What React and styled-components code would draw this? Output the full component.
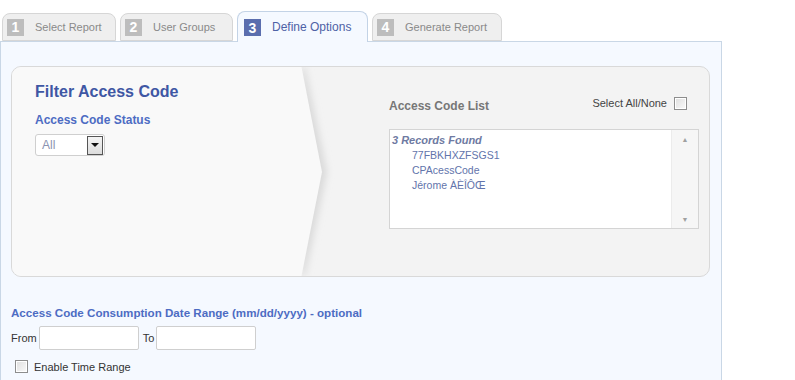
import React from 'react';
import styled, { createGlobalStyle } from 'styled-components';

const GlobalStyle = createGlobalStyle`
  body {
    margin: 0;
    background: #fff;
    font-family: "Liberation Sans", Arial, sans-serif;
  }
`;

const Page = styled.div`
  width: 795px;
  height: 380px;
  overflow: hidden;
`;

const TabRow = styled.div`
  display: flex;
  align-items: flex-end;
  gap: 4px;
  height: 41px;
  padding-left: 2px;
  position: relative;
  z-index: 1;
`;

const Tab = styled.div`
  display: flex;
  align-items: center;
  gap: 11px;
  box-sizing: border-box;
  width: ${p => p.w}px;
  height: ${p => (p.active ? 31 : 28)}px;
  padding: ${p => (p.active ? '0 0 1px 6px' : '0 0 0 4px')};
  border: 1px solid ${p => (p.active ? '#c3d3e6' : '#d6d6d6')};
  border-bottom: ${p => (p.active ? 'none' : '1px solid #d6d6d6')};
  border-radius: 8px 8px 0 0;
  background: ${p => (p.active ? '#f5f9ff' : '#efefef')};
  color: ${p => (p.active ? '#4e62a6' : '#8a8a8a')};
  font-size: ${p => (p.active ? 12 : 11)}px;
  margin-bottom: ${p => (p.active ? -1 : 0)}px;
`;

const Badge = styled.span`
  display: inline-flex;
  align-items: center;
  justify-content: center;
  width: 17px;
  height: 17px;
  background: ${p => (p.active ? '#5b6eae' : '#bdbdbd')};
  color: #fff;
  font-size: 14px;
  font-weight: bold;
  margin-top: ${p => (p.active ? 2 : 0)}px;
`;

const Panel = styled.div`
  box-sizing: border-box;
  width: 722px;
  height: 345px;
  border: 1px solid #c9d7e6;
  background: #f5f9ff;
  padding: 24px 11px 0 10px;
`;

const FilterBox = styled.div`
  display: flex;
  height: 211px;
  box-sizing: border-box;
  border: 1px solid #d9d9d9;
  border-radius: 10px;
  background: #f3f3f3;
  overflow: hidden;
`;

const LeftSide = styled.div`
  position: relative;
  width: 289px;
  flex-shrink: 0;
  background: #f9f9f9;
  padding: 16px 0 0 23px;
  box-sizing: border-box;
`;

const Arrow = styled.svg`
  position: absolute;
  top: 0;
  left: 289px;
  width: 34px;
  height: 100%;
`;

const Title = styled.h2`
  margin: 0;
  font-size: 16px;
  font-weight: bold;
  color: #3f57a4;
`;

const BlueLabel = styled.div`
  font-size: ${p => p.fs || 12}px;
  font-weight: bold;
  color: #4d6cc3;
  margin-top: ${p => p.mt || 0}px;
`;

const SelectBox = styled.div`
  display: flex;
  align-items: center;
  justify-content: space-between;
  box-sizing: border-box;
  width: 70px;
  height: 22px;
  margin-top: 7px;
  border: 1px solid #cfcfcf;
  border-radius: 3px;
  background: #fff;
  padding: 0 1px 0 6px;
  font-size: 12px;
  color: #8a92b0;
`;

const SelectButton = styled.div`
  display: flex;
  align-items: center;
  justify-content: center;
  width: 16px;
  height: 19px;
  box-sizing: border-box;
  border: 1px solid #555;
  background: linear-gradient(#f4f4f4, #dcdcdc);
  &::after {
    content: '';
    border-left: 4px solid transparent;
    border-right: 4px solid transparent;
    border-top: 4px solid #111;
  }
`;

const RightSide = styled.div`
  flex: 1;
  padding: 26px 10px 0 88px;
`;

const ListHeader = styled.div`
  display: flex;
  align-items: center;
  justify-content: space-between;
`;

const GrayLabel = styled.div`
  font-size: 12px;
  font-weight: bold;
  color: #777;
  margin-top: 6px;
`;

const SelectAll = styled.label`
  display: flex;
  align-items: center;
  gap: 7px;
  font-size: 11px;
  color: #444;
  margin-right: 12px;
`;

const Check = styled.span`
  display: inline-block;
  box-sizing: border-box;
  width: 13px;
  height: 13px;
  border: 1px solid #8d8d8d;
  background: linear-gradient(135deg, #dedede, #fafafa);
  box-shadow: inset 0 0 0 1px #fff;
`;

const ListBox = styled.div`
  display: flex;
  margin-top: 16px;
  height: 100px;
  box-sizing: border-box;
  border: 1px solid #d4d4d4;
  background: #fff;
`;

const ListItems = styled.div`
  flex: 1;
  padding: 3px 0 0 2px;
  font-size: 10.5px;
  line-height: 15px;
`;

const GroupLabel = styled.div`
  font-size: 11px;
  font-weight: bold;
  font-style: italic;
  color: #6e7aa2;
`;

const Item = styled.div`
  padding-left: 20px;
  color: #6274ab;
`;

const Scrollbar = styled.div`
  display: flex;
  flex-direction: column;
  justify-content: space-between;
  align-items: center;
  width: 26px;
  padding: 6px 0 5px;
  background: #f6f6f6;
  border-left: 1px solid #ececec;
  color: #a0a0a0;
  font-size: 7px;
`;

const DateSection = styled.div`
  margin-top: 29px;
`;

const DateRow = styled.div`
  display: flex;
  align-items: center;
  gap: 2px;
  margin-top: 7px;
  font-size: 11px;
  color: #333;
`;

const DateInput = styled.div`
  box-sizing: border-box;
  width: 100px;
  height: 24px;
  border: 1px solid #cfcfcf;
  border-radius: 2px;
  background: #fff;
  margin-right: ${p => p.mr || 0}px;
`;

const CheckRow = styled.label`
  display: flex;
  align-items: center;
  gap: 6px;
  margin-top: 10px;
  padding-left: 4px;
  font-size: 11px;
  color: #333;
`;

export default function App() {
  return (
    <Page>
      <GlobalStyle />
      <TabRow>
        <Tab w={114}><Badge>1</Badge>Select Report</Tab>
        <Tab w={113}><Badge>2</Badge>User Groups</Tab>
        <Tab w={131} active><Badge active>3</Badge>Define Options</Tab>
        <Tab w={130}><Badge>4</Badge>Generate Report</Tab>
      </TabRow>
      <Panel>
        <FilterBox>
          <LeftSide>
            <Title>Filter Access Code</Title>
            <BlueLabel mt={12}>Access Code Status</BlueLabel>
            <SelectBox>
              All
              <SelectButton />
            </SelectBox>
            <Arrow viewBox="0 0 34 211" preserveAspectRatio="none">
              <defs>
                <filter id="soft" x="-50%" y="-10%" width="200%" height="120%">
                  <feGaussianBlur stdDeviation="3.5" />
                </filter>
              </defs>
              <polygon points="0,0 4,0 26,106 4,211 0,211" fill="#dadada" filter="url(#soft)" />
              <polygon points="0,0 0.5,0 21,106 0.5,211 0,211" fill="#f9f9f9" />
            </Arrow>
          </LeftSide>
          <RightSide>
            <ListHeader>
              <GrayLabel>Access Code List</GrayLabel>
              <SelectAll>Select All/None <Check /></SelectAll>
            </ListHeader>
            <ListBox>
              <ListItems>
                <GroupLabel>3 Records Found</GroupLabel>
                <Item>77FBKHXZFSGS1</Item>
                <Item>CPAcessCode</Item>
                <Item>Jérome ÀÈÎÔŒ</Item>
              </ListItems>
              <Scrollbar>
                <span>▲</span>
                <span>▼</span>
              </Scrollbar>
            </ListBox>
          </RightSide>
        </FilterBox>
        <DateSection>
          <BlueLabel fs={11.6}>Access Code Consumption Date Range (mm/dd/yyyy) - optional</BlueLabel>
          <DateRow>
            From <DateInput mr={2} /> To <DateInput />
          </DateRow>
          <CheckRow><Check />Enable Time Range</CheckRow>
        </DateSection>
      </Panel>
    </Page>
  );
}
